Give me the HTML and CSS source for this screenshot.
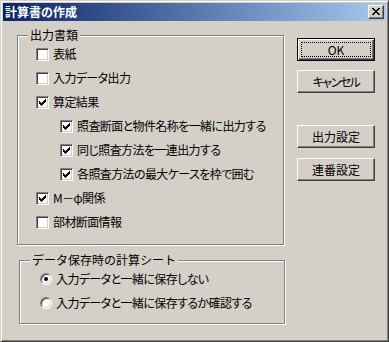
FILE: index.html
```html
<!DOCTYPE html>
<html lang="ja">
<head>
    <meta charset="UTF-8">
    <meta name="viewport" content="width=device-width, initial-scale=1.0">
    <title>計算書の作成</title>
    <link rel="stylesheet" href="styles.css">
</head>
<body>
    <div class="window">
        <div class="caption">
            <span class="caption-title">計算書の作成</span>
            <span class="close-btn">
                <svg width="8" height="7" viewBox="0 0 8 7" shape-rendering="crispEdges">
                    <path d="M0 0h2v1H0z M6 0h2v1H6z M1 1h2v1H1z M5 1h2v1H5z M2 2h4v1H2z M3 3h2v1H3z M2 4h4v1H2z M1 5h2v1H1z M5 5h2v1H5z M0 6h2v1H0z M6 6h2v1H6z" fill="#000"/>
                </svg>
            </span>
        </div>

        <div class="client">
            <div class="left-col">
                <div class="group group-output">
                    <span class="group-title">出力書類</span>
                    <div class="check-list">
                        <div class="check-row"><span class="checkbox"></span><span class="label">表紙</span></div>
                        <div class="check-row"><span class="checkbox"></span><span class="label">入力データ出力</span></div>
                        <div class="check-row"><span class="checkbox checked"></span><span class="label">算定結果</span></div>
                        <div class="check-row sub"><span class="checkbox checked"></span><span class="label">照査断面と物件名称を一緒に出力する</span></div>
                        <div class="check-row sub"><span class="checkbox checked"></span><span class="label">同じ照査方法を一連出力する</span></div>
                        <div class="check-row sub"><span class="checkbox checked"></span><span class="label">各照査方法の最大ケースを枠で囲む</span></div>
                        <div class="check-row"><span class="checkbox checked"></span><span class="label">M－φ関係</span></div>
                        <div class="check-row"><span class="checkbox"></span><span class="label">部材断面情報</span></div>
                    </div>
                </div>

                <div class="group group-save">
                    <span class="group-title">データ保存時の計算シート</span>
                    <div class="radio-list">
                        <div class="radio-row"><span class="radio selected"><span class="dot"></span></span><span class="label">入力データと一緒に保存しない</span></div>
                        <div class="radio-row"><span class="radio"><span class="dot"></span></span><span class="label">入力データと一緒に保存するか確認する</span></div>
                    </div>
                </div>
            </div>

            <div class="button-col">
                <button class="btn default"><span class="focus">OK</span></button>
                <button class="btn btn-cancel">キャンセル</button>
                <button class="btn btn-settings">出力設定</button>
                <button class="btn btn-serial">連番設定</button>
            </div>
        </div>
    </div>

    <script>
        // draw the check marks into the checked boxes
        const mark = '<svg width="9" height="9" viewBox="0 0 9 9" shape-rendering="crispEdges"><path d="M1 3h1v3H1z M2 4h1v3H2z M3 5h1v3H3z M4 4h1v3H4z M5 3h1v3H5z M6 2h1v3H6z M7 1h1v3H7z" fill="#000"/></svg>';
        document.querySelectorAll('.checkbox.checked').forEach(function(box) {
            box.innerHTML = mark;
        });
    </script>
</body>
</html>
```

FILE: styles.css
```css
body {
    margin: 0;
    padding: 0;
    background-color: #d4d0c8;
    font-family: "Noto Sans CJK JP", sans-serif;
    font-size: 12px;
    color: #000;
}
.window {
    width: 389px;
    height: 342px;
    box-sizing: border-box;
    background-color: #d4d0c8;
    border: 1px solid;
    border-color: #d4d0c8 #404040 #404040 #d4d0c8;
    box-shadow: inset 1px 1px #fff, inset -1px -1px #808080;
    padding: 2px;
    display: flex;
    flex-direction: column;
}
.caption {
    height: 18px;
    display: flex;
    align-items: center;
    justify-content: space-between;
    background: linear-gradient(to right, #0a246a, #a6caf0);
    padding: 0 2px;
}
.caption-title {
    color: #fff;
    font-weight: bold;
    font-size: 12px;
    line-height: 14px;
}
.close-btn {
    width: 16px;
    height: 14px;
    box-sizing: border-box;
    background-color: #d4d0c8;
    border: 1px solid;
    border-color: #fff #404040 #404040 #fff;
    box-shadow: inset -1px -1px #808080;
    display: flex;
    align-items: center;
    justify-content: center;
    padding-bottom: 1px;
}
.close-btn svg {
    display: block;
}
.client {
    flex: 1;
    display: flex;
}
.left-col {
    margin-left: 14px;
    margin-top: 14px;
    display: flex;
    flex-direction: column;
}
.group {
    box-sizing: border-box;
    border: 1px solid #808080;
    box-shadow: inset 1px 1px #fff, 1px 1px #fff;
}
.group-title {
    display: block;
    width: fit-content;
    margin: -8px 0 0 10px;
    padding: 0 2px;
    line-height: 14px;
    background-color: #d4d0c8;
}
.group-output {
    width: 267px;
    height: 210px;
}
.group-save {
    width: 266px;
    height: 64px;
    margin-top: 15px;
    margin-left: 2px;
}
.check-list {
    padding-left: 18px;
}
.check-row {
    height: 24px;
    display: flex;
    align-items: center;
}
.check-row.sub {
    padding-left: 24px;
}
.label {
    margin-left: 4px;
    line-height: 14px;
    white-space: nowrap;
    letter-spacing: -0.6px;
    font-feature-settings: "palt";
}
.checkbox {
    width: 13px;
    height: 13px;
    box-sizing: border-box;
    background-color: #fff;
    border: 1px solid;
    border-color: #808080 #fff #fff #808080;
    box-shadow: inset 1px 1px #404040, inset -1px -1px #d4d0c8;
    padding: 1px;
    flex-shrink: 0;
}
.checkbox svg {
    display: block;
}
.radio-list {
    padding-left: 20px;
}
.radio-row {
    height: 24px;
    display: flex;
    align-items: center;
}
.radio {
    width: 12px;
    height: 12px;
    box-sizing: border-box;
    border-radius: 50%;
    background-color: #fff;
    border: 1px solid;
    border-color: #808080 #fff #fff #808080;
    box-shadow: inset 1px 1px #404040, inset -1px -1px #d4d0c8;
    display: flex;
    align-items: center;
    justify-content: center;
    flex-shrink: 0;
}
.radio .dot {
    width: 4px;
    height: 4px;
    border-radius: 50%;
    background-color: transparent;
}
.radio.selected .dot {
    background-color: #000;
}
.button-col {
    margin-left: 12px;
    margin-top: 17px;
    display: flex;
    flex-direction: column;
}
.btn {
    width: 78px;
    height: 23px;
    box-sizing: border-box;
    margin: 0;
    padding: 0;
    background-color: #d4d0c8;
    border: 1px solid;
    border-color: #fff #404040 #404040 #fff;
    box-shadow: inset -1px -1px #808080;
    font-family: "Noto Sans CJK JP", sans-serif;
    font-size: 12px;
    line-height: 14px;
    color: #000;
}
.btn.default {
    border: 1px solid #000;
    box-shadow: inset 1px 1px #fff, inset -1px -1px #404040, inset -2px -2px #808080;
    padding: 3px;
}
.btn.default .focus {
    display: block;
    height: 100%;
    box-sizing: border-box;
    border: 1px dotted #000;
    line-height: 13px;
}
.btn-cancel {
    margin-top: 9px;
    letter-spacing: -1.5px;
    font-feature-settings: "palt";
}
.btn-settings {
    margin-top: 32px;
}
.btn-serial {
    margin-top: 10px;
}
```
